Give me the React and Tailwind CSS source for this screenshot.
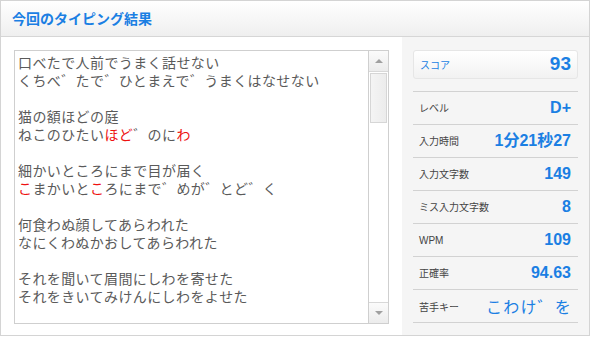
const jp = 'font-["Noto_Sans_CJK_JP",sans-serif]';

const lines = [
  [['口べたで人前でうまく話せない']],
  [['くちべ゛たで゛ひとまえで゛うまくはなせない']],
  [],
  [['猫の額ほどの庭']],
  [['ねこのひたい'], ['ほど', 'red'], ['゛のに'], ['わ', 'red']],
  [],
  [['細かいところにまで目が届く']],
  [['こ', 'red'], ['まかいと'], ['こ', 'red'], ['ろにまで゛めが゛とど゛く']],
  [],
  [['何食わぬ顔してあらわれた']],
  [['なにくわぬかおしてあらわれた']],
  [],
  [['それを聞いて眉間にしわを寄せた']],
  [['それをきいてみけんにしわをよせた']],
];

const stats = [
  { label: 'レベル', value: 'D+' },
  { label: '入力時間', value: '1分21秒27' },
  { label: '入力文字数', value: '149' },
  { label: 'ミス入力文字数', value: '8' },
  { label: 'WPM', value: '109' },
  { label: '正確率', value: '94.63' },
];

export default function App() {
  return (
    <div className="h-[337px] w-[593px] bg-white">
      <div className="flex h-[336px] w-[590px] flex-col border border-[#d4d4d4]">
        {/* header */}
        <div className="flex h-[36px] shrink-0 items-center border-b border-[#d6d6d6] bg-gradient-to-b from-white to-[#efefef] pl-[11px]">
          <h1 className={`text-[14px] font-bold text-[#1b7fe3] ${jp}`}>今回のタイピング結果</h1>
        </div>

        <div className="flex min-h-0 flex-1">
          {/* text box */}
          <div className="w-[401px] shrink-0 px-[13px] pt-[13px] pb-[11px]">
            <div className="flex h-full border border-[#cfcfcf]">
              <div className={`flex-1 overflow-hidden pl-[3px] pt-[2px] text-[14px] leading-[18px] tracking-[0.4px] text-[#5a5a5a] ${jp}`}>
                {lines.map((line, i) => (
                  <div key={i} className="h-[18px] whitespace-nowrap">
                    {line.map(([text, kind], j) => (
                      <span key={j} className={kind === 'red' ? 'text-[#ee1111]' : ''}>
                        {text}
                      </span>
                    ))}
                  </div>
                ))}
              </div>
              <div className="flex w-[20px] shrink-0 flex-col border-l border-[#cfcfcf] bg-white">
                <div className="flex h-[21px] items-center justify-center border-b border-[#d8d8d8] bg-gradient-to-b from-[#fbfbfb] to-[#ececec]">
                  <div className="h-0 w-0 border-x-[4px] border-b-[4px] border-x-transparent border-b-[#a0a0a0]" />
                </div>
                <div className="px-[1px] pt-[1px]">
                  <div className="h-[50px] border border-[#d6d6d6] bg-gradient-to-r from-[#f4f4f4] to-[#ececec]" />
                </div>
                <div className="flex-1" />
                <div className="flex h-[21px] items-center justify-center border-t border-[#d8d8d8] bg-gradient-to-b from-[#fbfbfb] to-[#ececec]">
                  <div className="h-0 w-0 border-x-[4px] border-t-[4px] border-x-transparent border-t-[#a0a0a0]" />
                </div>
              </div>
            </div>
          </div>

          {/* stats panel */}
          <div className="flex-1 bg-[#f5f5f5] px-[11px] pt-[13px]">
            <div className="flex h-[29px] items-center justify-between rounded-[3px] border border-[#e6e6e6] bg-gradient-to-b from-white to-[#f2f2f2] pl-[6px] pr-[6px]">
              <span className={`text-[10px] text-[#1b7fe3] ${jp}`}>スコア</span>
              <span className='font-["Liberation_Sans",sans-serif] text-[19px] font-bold text-[#1b7fe3]'>93</span>
            </div>
            <div className="mt-[12px] border-b border-[#d2d2d2]">
              {stats.map((s) => (
                <div key={s.label} className="flex h-[33px] items-center justify-between border-t border-[#d2d2d2] pl-[6px] pr-[7px]">
                  <span className='font-["Liberation_Sans","Noto_Sans_CJK_JP",sans-serif] text-[10px] text-[#444444]'>{s.label}</span>
                  <span className='font-["Liberation_Sans","Noto_Sans_CJK_JP",sans-serif] text-[16px] font-bold text-[#1b7fe3]'>{s.value}</span>
                </div>
              ))}
              <div className="flex h-[33px] items-center justify-between border-t border-[#d2d2d2] pl-[6px] pr-[6px]">
                <span className={`text-[10px] text-[#444444] ${jp}`}>苦手キー</span>
                <span className={`text-[16px] tracking-[1.2px] text-[#1b7fe3] ${jp}`}>こわけ゛を</span>
              </div>
            </div>
          </div>
        </div>
      </div>
    </div>
  );
}
